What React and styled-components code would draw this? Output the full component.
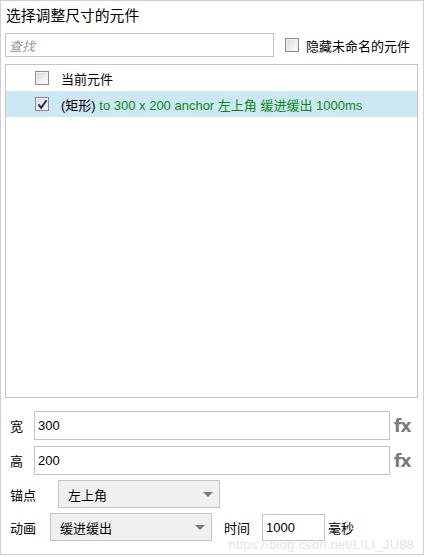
import React from "react";
import styled, { createGlobalStyle } from "styled-components";

const GlobalStyle = createGlobalStyle`
  body {
    margin: 0;
    background: #fff;
    font-family: "Liberation Sans", "Noto Sans CJK SC", sans-serif;
    font-size: 13px;
    color: #000;
  }
`;

const Panel = styled.div`
  position: relative;
  box-sizing: border-box;
  width: 424px;
  height: 555px;
  border: 1px solid #d0d0d0;
  padding: 4px 5px 0 4px;
  display: flex;
  flex-direction: column;
`;

const Title = styled.div`
  height: 22px;
  line-height: 22px;
  font-size: 14.8px;
  padding-left: 1px;
`;

const SearchRow = styled.div`
  display: flex;
  align-items: center;
  margin-top: 6px;
  height: 24px;
`;

const TextInput = styled.div`
  box-sizing: border-box;
  width: ${(p) => p.$w || "auto"};
  flex: ${(p) => (p.$grow ? 1 : "none")};
  height: ${(p) => p.$h || "24px"};
  border: 1px solid #c4c4c4;
  background: #fff;
  padding-left: 3px;
  display: flex;
  align-items: center;
  font-size: 13px;
  color: ${(p) => (p.$placeholder ? "#9a9a9a" : "#000")};
  font-style: ${(p) => (p.$placeholder ? "italic" : "normal")};
`;

const Box = styled.span`
  box-sizing: border-box;
  width: 14px;
  height: 14px;
  border: 1px solid #8a8a8a;
  background: linear-gradient(135deg, #d6d6d6 0%, #f4f4f4 70%, #fff 100%);
  box-shadow: inset 0 0 0 1px #f2f2f2;
  display: inline-flex;
  align-items: center;
  justify-content: center;
  flex: none;
`;

const CheckLabel = styled.label`
  display: flex;
  align-items: center;
  gap: 7px;
  margin-left: 11px;
`;

const List = styled.div`
  box-sizing: border-box;
  margin-top: 7px;
  height: 334px;
  border: 1px solid #c4c4c4;
  background: #fff;
`;

const Row = styled.div`
  height: 26px;
  display: flex;
  align-items: center;
  padding-left: 29px;
  gap: 12px;
  background: ${(p) => (p.$active ? "#cde8f5" : "transparent")};
`;

const Green = styled.span`
  color: #0a8a0a;
`;

const Form = styled.div`
  margin-top: 13px;
  display: flex;
  flex-direction: column;
  gap: 5px;
`;

const FieldRow = styled.div`
  display: flex;
  align-items: center;
  height: ${(p) => p.$h || "29px"};
  padding-left: 5px;
  margin-bottom: ${(p) => p.$mb || 0};
`;

const Label = styled.span`
  width: ${(p) => p.$w};
  flex: none;
`;

const Fx = styled.span`
  width: 28px;
  padding-left: 4px;
  box-sizing: border-box;
  font-weight: bold;
  font-size: 17px;
  color: #7a7a7a;
  font-family: "DejaVu Sans", sans-serif;
  letter-spacing: -1px;
`;

const Select = styled.div`
  box-sizing: border-box;
  width: 162px;
  height: 28px;
  border: 1px solid #c4c4c4;
  background: #f0f0f0;
  display: flex;
  align-items: center;
  justify-content: space-between;
  padding: 0 6px 0 9px;
  font-size: 13px;
`;

const Arrow = styled.span`
  width: 0;
  height: 0;
  border-left: 5px solid transparent;
  border-right: 5px solid transparent;
  border-top: 5px solid #7b7b7b;
  margin-top: 1px;
`;

const SideLabel = styled.span`
  margin: 0 12px 0 ${(p) => p.$ml || "12px"};
`;

const Watermark = styled.div`
  position: absolute;
  right: 9px;
  bottom: 2px;
  font-size: 13px;
  color: #e4e4e4;
  letter-spacing: 0.2px;
  pointer-events: none;
`;

const Check = ({ checked }) => (
  <Box>
    {checked && (
      <svg width="11" height="11" viewBox="0 0 11 11">
        <path d="M1.5 5.5 L4.2 8.8 L9.5 1.2" fill="none" stroke="#1d2a8c" strokeWidth="2" />
      </svg>
    )}
  </Box>
);

export default function App() {
  return (
    <>
      <GlobalStyle />
      <Panel>
        <Title>选择调整尺寸的元件</Title>
        <SearchRow>
          <TextInput $w="269px" $placeholder>查找</TextInput>
          <CheckLabel>
            <Check />
            隐藏未命名的元件
          </CheckLabel>
        </SearchRow>
        <List>
          <Row>
            <Check />
            当前元件
          </Row>
          <Row $active>
            <Check checked />
            <span>
              (矩形) <Green>to 300 x 200 anchor 左上角 缓进缓出 1000ms</Green>
            </span>
          </Row>
        </List>
        <Form>
          <FieldRow $mb="1px">
            <Label $w="24px">宽</Label>
            <TextInput $grow $h="29px">300</TextInput>
            <Fx>fx</Fx>
          </FieldRow>
          <FieldRow>
            <Label $w="24px">高</Label>
            <TextInput $grow $h="29px">200</TextInput>
            <Fx>fx</Fx>
          </FieldRow>
          <FieldRow $h="28px">
            <Label $w="48px">锚点</Label>
            <Select>
              左上角
              <Arrow />
            </Select>
          </FieldRow>
          <FieldRow $h="28px">
            <Label $w="40px">动画</Label>
            <Select>
              缓进缓出
              <Arrow />
            </Select>
            <SideLabel>时间</SideLabel>
            <TextInput $w="63px" $h="27px">1000</TextInput>
            <SideLabel $ml="3px">毫秒</SideLabel>
          </FieldRow>
        </Form>
        <Watermark>https://blog.csdn.net/LILI_JU88</Watermark>
      </Panel>
    </>
  );
}
